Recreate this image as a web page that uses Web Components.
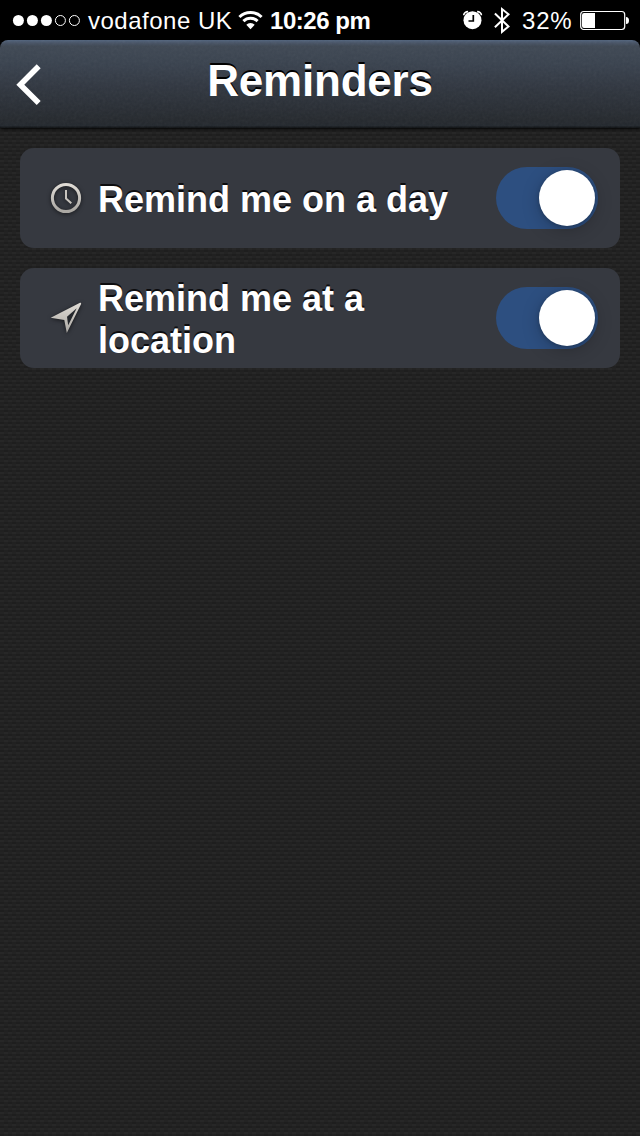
<!DOCTYPE html>
<html lang="en">
<head>
<meta charset="utf-8">
<title>Reminders</title>
<style>
  * {
    box-sizing: border-box;
  }
  body {
    margin: 0;
    background: #000;
    color: #fff;
    font-family: "Liberation Sans", Arial, sans-serif;
  }
</style>
</head>
<body>
<reminders-screen></reminders-screen>
<script>
class StatusBar extends HTMLElement {
  constructor () {
    super()
    this.shadow = this.attachShadow({ mode: 'open' })
  }

  connectedCallback () {
    this.shadow.innerHTML =
    /*html*/`
    <style>
      :host {
        display: flex;
        align-items: center;
        height: 40px;
        padding: 0 11px 0 12px;
        background: #000;
        font-size: 24px;
        line-height: 40px;
        white-space: nowrap;
      }
      svg {
        display: block;
        flex: none;
      }
      .carrier {
        width: 144px;
        margin-left: 8px;
        letter-spacing: 0.5px;
        padding-top: 2px;
      }
      .wifi {
        margin-left: 6px;
      }
      .time {
        margin-left: 7px;
        font-weight: bold;
        letter-spacing: -0.45px;
        padding-top: 2px;
      }
      .alarm {
        margin-left: auto;
      }
      .bluetooth {
        margin-left: 11px;
      }
      .percent {
        width: 51px;
        margin-left: 11px;
        letter-spacing: 0.8px;
        padding-top: 2px;
      }
      .battery {
        margin-left: 7px;
      }
    </style>
    <svg width="68" height="40" viewBox="0 0 68 40" fill="#fff">
      <circle cx="6.4" cy="20.5" r="5.5"/>
      <circle cx="20.4" cy="20.5" r="5.5"/>
      <circle cx="34.4" cy="20.5" r="5.5"/>
      <circle cx="48.4" cy="20.5" r="5" fill="none" stroke="#fff"/>
      <circle cx="62.4" cy="20.5" r="5" fill="none" stroke="#fff"/>
    </svg>
    <span class="carrier">vodafone UK</span>
    <svg class="wifi" width="25" height="40" viewBox="0 0 25 40" fill="none" stroke="#fff" stroke-width="3">
      <path d="M1.4 17a16 16 0 0 1 22.2 0M5.4 21.1a10.1 10.1 0 0 1 14.2 0"/>
      <path d="M12.5 29.2l-4.200-4.400a5.900 5.900 0 0 1 8.400 0z" fill="#fff" stroke="none"/>
    </svg>
    <span class="time">10:26 pm</span>
    <svg class="alarm" width="20" height="40" viewBox="0 0 20 40" fill="none" stroke="#fff">
      <circle cx="9.500" cy="20.200" r="9" fill="#fff" stroke="none"/>
      <path d="M.8 15.200c0-2 2-3.500 4.300-3.600M18.400 15.200c0-2-2-3.500-4.300-3.600" stroke-width="1.700"/>
      <path d="M10.300 15v6H5.500" stroke="#000" stroke-width="1.700"/>
    </svg>
    <svg class="bluetooth" width="17" height="40" viewBox="0 0 17 40" fill="none" stroke="#fff" stroke-width="2">
      <path d="M.9 13.500L14.500 26.500l-6.500 5.300V9L14.500 14.300.9 27.300"/>
    </svg>
    <span class="percent">32%</span>
    <svg class="battery" width="49" height="40" viewBox="0 0 49 40">
      <rect x="0.700" y="11.500" width="44" height="18" rx="3" fill="none" stroke="#fff" stroke-width="1.200"/>
      <path d="M2 15q0-2 2-2h11v15H4q-2 0-2-2zM46 17q3 0 3 3.500T46 24z" fill="#fff"/>
    </svg>
    `
  }
}

class NavBar extends HTMLElement {
  constructor () {
    super()
    this.shadow = this.attachShadow({ mode: 'open' })
  }

  connectedCallback () {
    this.shadow.innerHTML =
    /*html*/`
    <style>
      :host {
        display: grid;
        grid-template-columns: 60px 1fr 60px;
        height: 88px;
        border-radius: 8px 8px 0 0;
        background: linear-gradient(#52647d 0, #475365 3px, #3f4854 6px, #39424e 24px, #2f353e 50px, #25292e 80px, #23282e 86px, #121518 87px);
        box-shadow: 0 1px 3px #000;
        position: relative;
      }
      .grain {
        position: absolute;
        inset: 0;
        width: 100%;
        height: 100%;
        border-radius: inherit;
        opacity: 0.06;
      }
      .back {
        padding: 24px 0 0 16px;
      }
      h1 {
        margin: 0;
        font-size: 44px;
        line-height: 82px;
        letter-spacing: -0.2px;
        text-align: center;
        text-shadow: 0 -2px 0 #000;
      }
      .back, h1 {
        position: relative;
      }
    </style>
    <svg class="grain">
      <filter id="noise"><feTurbulence type="fractalNoise" baseFrequency="0.35" numOctaves="2"/><feColorMatrix type="saturate" values="0"/></filter>
      <rect width="100%" height="100%" filter="url(#noise)"/>
    </svg>
    <div class="back">
      <svg width="26" height="42" viewBox="0 0 26 42" fill="none" stroke="#fff" stroke-width="5.600">
        <path d="M22.700 2.300L4.300 20.700l18.400 18.400"/>
      </svg>
    </div>
    <h1><slot></slot></h1>
    `
  }
}

class ToggleSwitch extends HTMLElement {
  constructor () {
    super()
    this.shadow = this.attachShadow({ mode: 'open' })
  }

  connectedCallback () {
    this.shadow.innerHTML =
    /*html*/`
    <style>
      :host {
        display: flex;
        align-items: center;
        justify-content: flex-start;
        flex: none;
        width: 102px;
        height: 62px;
        padding: 0 3px;
        border-radius: 31px;
        background: #555;
        box-sizing: border-box;
      }
      :host([on]) {
        justify-content: flex-end;
        background: #2d4f80;
      }
      .knob {
        width: 56px;
        height: 56px;
        border-radius: 50%;
        background: #fff;
        box-shadow: 0 4px 18px rgba(0, 0, 0, 0.22), 0 1px 4px rgba(0, 0, 0, 0.2);
      }
    </style>
    <div class="knob"></div>
    `
    this.addEventListener('click', () => this.toggleAttribute('on'))
  }
}

class ReminderRow extends HTMLElement {
  constructor () {
    super()
    this.shadow = this.attachShadow({ mode: 'open' })
  }

  connectedCallback () {
    this.shadow.innerHTML =
    /*html*/`
    <style>
      :host {
        display: flex;
        align-items: center;
        height: 100px;
        padding: 0 22px 0 28px;
        border-radius: 14px;
        background: #363940;
        box-sizing: border-box;
      }
      ::slotted(svg) {
        flex: none;
        filter: drop-shadow(0 1px 2px rgba(0, 0, 0, 0.6));
      }
      .label {
        flex: 1;
        margin: 0 14px;
        padding-top: 3px;
        font-size: 36px;
        font-weight: bold;
        line-height: 42px;
        text-shadow: 0 -2px 0 #0c0c0e;
      }
    </style>
    <slot name="icon"></slot>
    <div class="label"><slot></slot></div>
    <toggle-switch on></toggle-switch>
    `
  }
}

class RemindersScreen extends HTMLElement {
  constructor () {
    super()
    this.shadow = this.attachShadow({ mode: 'open' })
  }

  connectedCallback () {
    this.shadow.innerHTML =
    /*html*/`
    <style>
      :host {
        display: flex;
        flex-direction: column;
        width: 640px;
        height: 1136px;
        overflow: hidden;
      }
      main {
        flex: 1;
        display: flex;
        flex-direction: column;
        gap: 20px;
        padding: 20px;
        background:
          conic-gradient(rgba(0, 0, 0, 0.1) 25%, transparent 0 50%, rgba(0, 0, 0, 0.1) 0 75%, transparent 0) 0 0 / 8px 8px,
          repeating-linear-gradient(#272727 0 2px, #212121 2px 4px);
      }
    </style>
    <status-bar></status-bar>
    <nav-bar>Reminders</nav-bar>
    <main>
      <reminder-row>
        <svg slot="icon" width="36" height="36" viewBox="0 0 36 36" fill="none">
          <linearGradient id="ring" x2="0" y2="1"><stop stop-color="#e0dcd6"/><stop offset="1" stop-color="#aaa7a2"/></linearGradient>
          <circle cx="18" cy="18" r="13.600" stroke="url(#ring)" stroke-width="3"/>
          <path d="M18 10v8.500l5.300 4.800" stroke="#c8c4be" stroke-width="2"/>
        </svg>
        Remind me on a day
      </reminder-row>
      <reminder-row>
        <svg slot="icon" width="36" height="36" viewBox="0 0 36 36">
          <linearGradient id="arrow" x2="0" y2="1"><stop stop-color="#e0dcd6"/><stop offset="1" stop-color="#aaa7a2"/></linearGradient>
          <path d="M32 2.800q1.400-.4 1.100 1.200L18.800 33l-2.500-13L2.700 17.700z" fill="url(#arrow)"/>
          <path d="M28.700 8.300L19 16.800l1.200 8.400z" fill="#24272c"/>
        </svg>
        Remind me at a location
      </reminder-row>
    </main>
    `
  }
}

customElements.define('status-bar', StatusBar)
customElements.define('nav-bar', NavBar)
customElements.define('toggle-switch', ToggleSwitch)
customElements.define('reminder-row', ReminderRow)
customElements.define('reminders-screen', RemindersScreen)
</script>
</body>
</html>
